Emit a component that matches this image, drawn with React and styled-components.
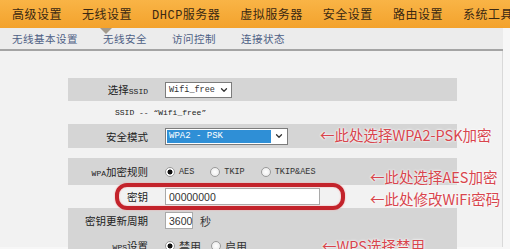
import React from "react";
import styled, { createGlobalStyle } from "styled-components";
import { ChevronDown } from "lucide-react";

const Global = createGlobalStyle`
  html, body { margin: 0; padding: 0; background: #f7f7f7; }
  body { font-family: "Noto Sans CJK SC", "Liberation Sans", sans-serif; }
`;

const topItems = ["高级设置", "无线设置", "DHCP服务器", "虚拟服务器", "安全设置", "路由设置", "系统工具"];
const subItems = ["无线基本设置", "无线安全", "访问控制", "连接状态"];

function App() {
  return (
    <Page>
      <Global />
      <TopBar>
        {topItems.map((t) => (
          <TopItem key={t}>{t}</TopItem>
        ))}
      </TopBar>
      <SubBar>
        <Notch />
        {subItems.map((t) => (
          <SubItem key={t}>{t}</SubItem>
        ))}
      </SubBar>
      <Panel>
        <Table>
          <Row band h={23}>
            <Label>选择<Small>SSID</Small></Label>
            <Value>
              <Select w={67}>
                <span>Wifi_free</span>
                <ChevronDown size={10} strokeWidth={3} />
              </Select>
            </Value>
          </Row>
          <Row h={23}>
            <Caption>SSID -- “Wifi_free”</Caption>
          </Row>
          <Row band h={24}>
            <Label>安全模式</Label>
            <Value>
              <BlueSelect>
                <Picked>WPA2 - PSK</Picked>
                <Arrow><ChevronDown size={10} strokeWidth={3} /></Arrow>
              </BlueSelect>
            </Value>
          </Row>
          <Row h={10} />
          <Row band h={27}>
            <Label><Small>WPA</Small>加密规则</Label>
            <Value>
              <Radio checked /> <Opt>AES</Opt>
              <Radio /> <Opt>TKIP</Opt>
              <Radio /> <Opt>TKIP&amp;AES</Opt>
            </Value>
          </Row>
          <Row h={23}>
            <Label>密钥</Label>
            <Value>
              <Field w={155}>00000000</Field>
            </Value>
          </Row>
          <Row band h={25}>
            <Label>密钥更新周期</Label>
            <Value>
              <Field w={28}>3600</Field>
              <Unit>秒</Unit>
            </Value>
          </Row>
          <Row band h={25}>
            <Label><Small>WPS</Small>设置</Label>
            <Value>
              <Radio checked /> <Cn>禁用</Cn>
              <Radio /> <Cn>启用</Cn>
            </Value>
          </Row>
        </Table>
        <Ring />
        <Note x={320} y={74}>←此处选择WPA2-PSK加密</Note>
        <Note x={370} y={116}>←此处选择AES加密</Note>
        <Note x={370} y={138}>←此处修改WiFi密码</Note>
        <Note x={322} y={185}>←WPS选择禁用</Note>
      </Panel>
    </Page>
  );
}

const Page = styled.div`
  width: 510px;
  height: 249px;
  overflow: hidden;
  background: #f7f7f7;
`;

const TopBar = styled.div`
  height: 28px;
  display: flex;
  align-items: center;
  gap: 20px;
  padding-left: 12px;
  background: linear-gradient(#f9b446, #f3a22c);
  white-space: nowrap;
`;

const TopItem = styled.div`
  font-size: 12px;
  color: #3a2812;
  font-family: "Liberation Mono", "Noto Sans CJK SC", monospace;
  letter-spacing: 0.5px;
`;

const SubBar = styled.div`
  position: relative;
  height: 23px;
  display: flex;
  align-items: center;
  gap: 25px;
  padding-left: 12px;
  background: #ececec;
  border-bottom: 2px solid #a4a4a4;
  width: 503px;
  box-sizing: border-box;
`;

const Notch = styled.div`
  position: absolute;
  left: 100px;
  top: 0;
  width: 0;
  height: 0;
  border-left: 6px solid transparent;
  border-right: 6px solid transparent;
  border-top: 6px solid #a39a8c;
`;

const SubItem = styled.div`
  font-size: 10.5px;
  color: #4e5f85;
  letter-spacing: 0.5px;
`;

const Panel = styled.div`
  position: relative;
  width: 503px;
  height: 196px;
  box-sizing: border-box;
  background: #f2f2f2;
  border-right: 1px solid #d9d9d9;
  padding: 27px 0 0 68px;
`;

const Table = styled.div`
  width: 389px;
  display: flex;
  flex-direction: column;
`;

const Row = styled.div`
  height: ${(p) => p.h}px;
  display: grid;
  grid-template-columns: 80px 1fr;
  column-gap: 17px;
  align-items: center;
  background: ${(p) => (p.band ? "#d5d5d5" : "transparent")};
`;

const Label = styled.div`
  text-align: right;
  font-size: 10.5px;
  color: #222;
  white-space: nowrap;
`;

const Small = styled.span`
  font-family: "Liberation Mono", monospace;
  font-size: 8px;
`;

const Value = styled.div`
  display: flex;
  align-items: center;
  white-space: nowrap;
`;

const Caption = styled.div`
  grid-column: 1 / 3;
  padding-left: 47px;
  font-family: "Liberation Mono", monospace;
  font-size: 8px;
  color: #222;
`;

const Select = styled.div`
  width: ${(p) => p.w}px;
  height: 16px;
  box-sizing: border-box;
  border: 1px solid #7c7c7c;
  background: #fff;
  display: flex;
  align-items: center;
  justify-content: space-between;
  padding: 0 2px 0 3px;
  font-family: "Liberation Mono", monospace;
  font-size: 8.5px;
  color: #333;
`;

const BlueSelect = styled.div`
  width: 123px;
  height: 17px;
  box-sizing: border-box;
  border: 1px solid #7c7c7c;
  background: #fff;
  display: flex;
  padding: 1px;
`;

const Picked = styled.div`
  flex: 1;
  background: #2f8fd6;
  color: #fff;
  font-family: "Liberation Mono", monospace;
  font-size: 9px;
  display: flex;
  align-items: center;
  padding-left: 2px;
`;

const Arrow = styled.div`
  width: 15px;
  display: flex;
  align-items: center;
  justify-content: center;
  color: #333;
`;

const Radio = styled.span`
  width: 10px;
  height: 10px;
  box-sizing: border-box;
  border-radius: 50%;
  border: 1px solid #9a9a9a;
  background: radial-gradient(circle, ${(p) => (p.checked ? "#111 0 2.2px, #fff 2.8px" : "#fff 0, #e6e6e6 100%")});
  display: inline-block;
  margin-right: 4px;
`;

const Opt = styled.span`
  font-family: "Liberation Mono", monospace;
  font-size: 8.5px;
  color: #333;
  margin-right: 16px;
`;

const Cn = styled.span`
  font-size: 11px;
  color: #333;
  margin-right: 10px;
`;

const Field = styled.div`
  width: ${(p) => p.w}px;
  height: 17px;
  box-sizing: border-box;
  border: 1px solid #a9a9a9;
  background: #fff;
  font-family: "Liberation Sans", sans-serif;
  font-size: 10.5px;
  color: #333;
  display: flex;
  align-items: center;
  padding-left: 3px;
`;

const Unit = styled.span`
  font-size: 11px;
  color: #333;
  margin-left: 7px;
`;

const Ring = styled.div`
  position: absolute;
  left: 115px;
  top: 132px;
  width: 230px;
  height: 27px;
  box-sizing: border-box;
  border: 4px solid #c3232b;
  border-radius: 12px;
  box-shadow: 0 0 2px #f2a5a5, inset 0 0 2px #f2a5a5;
`;

const Note = styled.div`
  position: absolute;
  left: ${(p) => p.x}px;
  top: ${(p) => p.y}px;
  font-size: 14.5px;
  line-height: 20px;
  color: #d8454d;
  white-space: nowrap;
  text-shadow: 0 0 2px #fff, 0 0 3px #fff;
`;

export default App;
